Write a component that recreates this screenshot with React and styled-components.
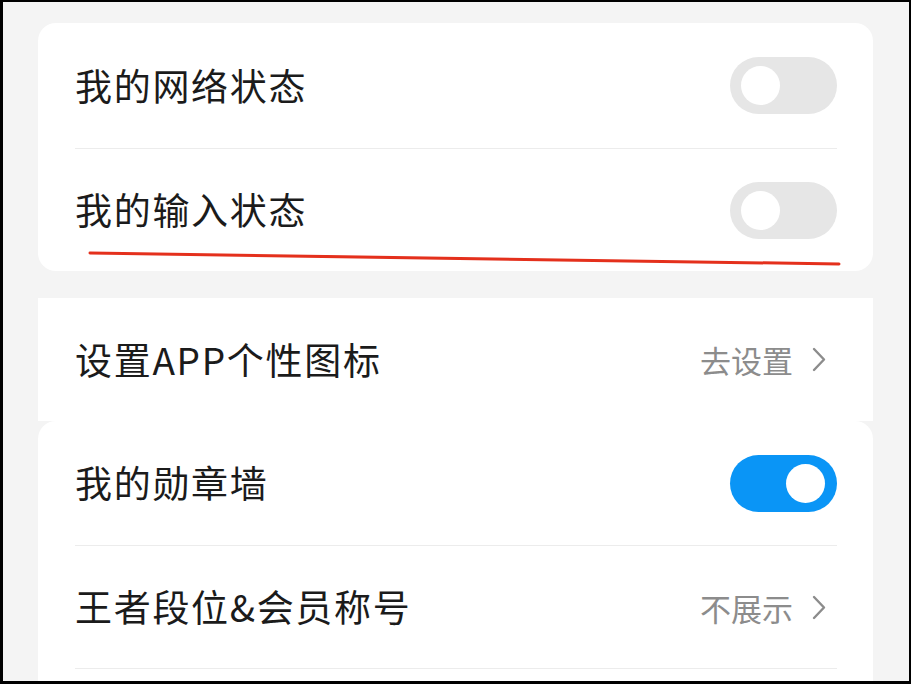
import React from 'react';
import styled, { createGlobalStyle } from 'styled-components';

const GlobalStyle = createGlobalStyle`
  html, body {
    margin: 0;
    padding: 0;
    background: #000;
  }
  body {
    font-family: 'Noto Sans CJK SC', 'Noto Sans', sans-serif;
  }
`;

const Frame = styled.div`
  position: relative;
  box-sizing: border-box;
  width: 911px;
  height: 684px;
  border: solid #000;
  border-width: 2px 2px 3px 3px;
  background: #f4f4f4;
  overflow: hidden;
  padding: 21px 36px 0 35px;
`;

const Card = styled.div`
  background: #fff;
  border-radius: ${(p) => (p.$square ? '0' : '18px')};
  margin-top: ${(p) => p.$gap || 0}px;
  overflow: hidden;
`;

const Row = styled.div`
  box-sizing: border-box;
  height: ${(p) => p.$h}px;
  margin: 0 36px 0 37px;
  display: flex;
  align-items: center;
  justify-content: space-between;
  border-bottom: ${(p) => (p.$line ? '1px solid #ececec' : 'none')};
`;

const Label = styled.span`
  font-size: 37px;
  color: #1b1b1b;
  letter-spacing: 1.7px;
  margin-top: -2px;
`;

const Toggle = styled.span`
  position: relative;
  width: 107px;
  height: 57px;
  border-radius: 29px;
  background: ${(p) => (p.$on ? '#0a95f6' : '#e6e6e6')};

  &::after {
    content: '';
    position: absolute;
    top: 9px;
    left: ${(p) => (p.$on ? '56px' : '11px')};
    width: 39px;
    height: 39px;
    border-radius: 50%;
    background: #fff;
  }
`;

const Action = styled.span`
  display: flex;
  align-items: center;
  gap: 19px;
  font-size: 31px;
  color: #8c8c8c;
  margin-right: 11px;
`;

const Chevron = () => (
  <svg width="14" height="25" viewBox="0 0 14 25">
    <polyline
      points="2,2 12,12.5 2,23"
      fill="none"
      stroke="#8c8c8c"
      strokeWidth="2.4"
      strokeLinecap="round"
      strokeLinejoin="round"
    />
  </svg>
);

const Mark = styled.svg`
  position: absolute;
  top: 0;
  left: 0;
  pointer-events: none;
`;

export default function App() {
  return (
    <>
      <GlobalStyle />
      <Frame>
        <Card>
          <Row $h={126} $line>
            <Label>我的网络状态</Label>
            <Toggle />
          </Row>
          <Row $h={122}>
            <Label>我的输入状态</Label>
            <Toggle />
          </Row>
        </Card>
        <Card $square $gap={27}>
          <Row $h={123}>
            <Label>设置APP个性图标</Label>
            <Action>
              去设置
              <Chevron />
            </Action>
          </Row>
        </Card>
        <Card>
          <Row $h={125} $line>
            <Label>我的勋章墙</Label>
            <Toggle $on />
          </Row>
          <Row $h={123} $line>
            <Label>王者段位&amp;会员称号</Label>
            <Action>
              不展示
              <Chevron />
            </Action>
          </Row>
          <Row $h={124} />
        </Card>
        <Mark width="906" height="679">
          <line x1="87" y1="251" x2="836" y2="262" stroke="#e4301c" strokeWidth="3" strokeLinecap="round" />
        </Mark>
      </Frame>
    </>
  );
}
